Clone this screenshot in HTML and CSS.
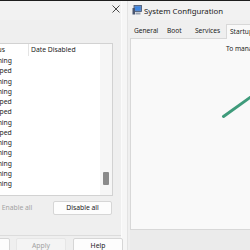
FILE: index.html
```html
<!DOCTYPE html>
<html>
<head>
<meta charset="utf-8">
<link rel="stylesheet" href="styles.css">
</head>
<body>
<div class="screen">
  <div class="topline"></div>
  <div class="desk">
    <section class="win-left">
      <header class="tb-left">
        <svg class="close" width="8" height="8" viewBox="0 0 8 8"><path d="M0.5 0.5 L7.5 7.5 M7.5 0.5 L0.5 7.5" stroke="#333" stroke-width="0.9" fill="none"/></svg>
      </header>
      <div class="body-left">
        <div class="listbox">
          <div class="list">
            <div class="row head"><span class="c-status">Status</span><span class="c-date">Date Disabled</span></div>
            <div class="row"><span class="c-status">Running</span></div>
            <div class="row"><span class="c-status">Stopped</span></div>
            <div class="row"><span class="c-status">Running</span></div>
            <div class="row"><span class="c-status">Running</span></div>
            <div class="row"><span class="c-status">Stopped</span></div>
            <div class="row"><span class="c-status">Stopped</span></div>
            <div class="row"><span class="c-status">Running</span></div>
            <div class="row"><span class="c-status">Stopped</span></div>
            <div class="row"><span class="c-status">Running</span></div>
            <div class="row"><span class="c-status">Running</span></div>
            <div class="row"><span class="c-status">Running</span></div>
            <div class="row"><span class="c-status">Running</span></div>
            <div class="row"><span class="c-status">Running</span></div>
          </div>
          <div class="vscroll"><div class="thumb"></div></div>
        </div>
        <div class="btnrow">
          <button class="btn btn-off enable">Enable all</button>
          <button class="btn disable">Disable all</button>
        </div>
        <div class="footer">
          <button class="btn fb cancel">Cancel</button>
          <button class="btn btn-off fb apply">Apply</button>
          <button class="btn fb help">Help</button>
        </div>
      </div>
    </section>
    <section class="win-right">
      <header class="tb-right">
        <svg class="appicon" width="10" height="10" viewBox="0 0 10 10">
          <rect x="2" y="0.5" width="7.5" height="6" fill="#6d8fc4" stroke="#44536e" stroke-width="0.8"/>
          <rect x="3" y="1.5" width="5.5" height="4" fill="#3f86e0"/>
          <rect x="0.5" y="3" width="2.5" height="6.5" fill="#4a5670"/>
          <rect x="3.5" y="7.5" width="5" height="2" fill="#9aa3b2"/>
        </svg>
        <span class="title">System Configuration</span>
      </header>
      <nav class="tabs">
        <span class="tab t-general">General</span>
        <span class="tab t-boot">Boot</span>
        <span class="tab t-services">Services</span>
        <span class="tab t-startup active">Startup</span>
      </nav>
      <div class="panel">
        <p class="msg">To manage startup items, use the Startup section of Task Manager.</p>
      </div>
      <div class="bottombar"></div>
    </section>
  </div>
  <svg class="annot" width="250" height="250" viewBox="0 0 250 250"><line x1="223.5" y1="116.5" x2="266" y2="86" stroke="#3f9b7b" stroke-width="3" stroke-linecap="round"/></svg>
</div>
</body>
</html>
```
FILE: styles.css
```css
html, body {
  margin: 0;
  padding: 0;
}
body {
  width: 250px;
  height: 250px;
  overflow: hidden;
  background: #f0f0f0;
  font-family: "Noto Sans", "Liberation Sans", sans-serif;
  color: #1b1b1b;
}
.screen {
  position: relative;
  width: 250px;
  height: 250px;
  overflow: hidden;
  display: flex;
  flex-direction: column;
}
.topline {
  height: 1px;
  background: #1e1e1e;
  flex: none;
}
.desk {
  flex: 1;
  display: flex;
  background: #f6f6f6;
}
.win-left {
  width: 121px;
  flex: none;
  border-right: 1px solid #fbfbfb;
  background: #efefef;
  display: flex;
  flex-direction: column;
}
.tb-left {
  height: 19px;
  background: #f2f2f2;
  display: flex;
  justify-content: flex-end;
  align-items: flex-start;
  padding: 4px 0 0 0;
  box-sizing: border-box;
}
.close {
  display: block;
  margin-right: 1px;
}
.body-left {
  flex: 1;
  padding-top: 23px;
  display: flex;
  flex-direction: column;
}
.listbox {
  margin-left: -30px;
  width: 143px;
  height: 153px;
  box-sizing: border-box;
  border: 1px solid #d2d2d2;
  background: #fff;
  display: flex;
  flex: none;
}
.list {
  flex: 1;
  min-width: 0;
}
.row {
  display: flex;
  height: 10.25px;
  font-size: 6.8px;
  line-height: 10.25px;
  white-space: nowrap;
}
.row.head {
  height: 12px;
  line-height: 12px;
}
.c-status {
  width: 58px;
  flex: none;
  box-sizing: border-box;
  padding-left: 14px;
}
.head .c-status {
  border-right: 1px solid #e4e4e4;
}
.c-date {
  padding-left: 2px;
}
.vscroll {
  width: 12px;
  flex: none;
  background: #f6f6f6;
  padding-top: 128px;
  box-sizing: border-box;
}
.thumb {
  width: 6px;
  height: 13px;
  margin-left: 3px;
  background: #8a8a8a;
  border-radius: 1px;
}
.btn {
  font-family: inherit;
  font-size: 6.8px;
  color: #1b1b1b;
  background: #fdfdfd;
  border: 1px solid #d6d6d6;
  border-radius: 2px;
  padding: 0;
  margin: 0;
  height: 14px;
  box-sizing: border-box;
  line-height: 12px;
  text-align: center;
  flex: none;
}
.btn-off {
  color: #a2a2a2;
  background: #f4f4f4;
  border-color: #e6e6e6;
}
.btnrow {
  display: flex;
  gap: 5px;
  margin-top: 5px;
  margin-left: -14px;
}
.enable {
  width: 62px;
  border-color: transparent;
  background: transparent;
}
.disable {
  width: 59px;
}
.footer {
  margin-top: 20px;
  border-top: 1px solid #dcdcdc;
  padding-top: 2px;
  display: flex;
  margin-left: -40px;
  flex: 1;
}
.fb {
  height: 16px;
}
.cancel {
  width: 50px;
}
.apply {
  width: 50px;
  margin-left: 6px;
}
.help {
  width: 50px;
  margin-left: 7px;
}
.win-right {
  flex: 1;
  margin-left: 5px;
  border-left: 1px solid #e3e3e3;
  background: #efefef;
  display: flex;
  flex-direction: column;
  min-width: 0;
}
.tb-right {
  height: 19px;
  background: #f2f2f2;
  display: flex;
  align-items: center;
  padding-left: 4px;
  gap: 2px;
  white-space: nowrap;
}
.appicon {
  display: block;
  flex: none;
  margin-top: -1px;
}
.title {
  font-size: 7.8px;
  color: #1b1b1b;
}
.tabs {
  height: 18px;
  display: flex;
  align-items: flex-end;
  padding-left: 2px;
  white-space: nowrap;
  position: relative;
  z-index: 1;
}
.tab {
  font-size: 6.6px;
  height: 14px;
  line-height: 14px;
  padding-left: 4px;
  box-sizing: border-box;
  flex: none;
}
.t-general { width: 33px; }
.t-boot { width: 28px; }
.t-services { width: 35px; }
.t-startup {
  width: 50px;
  height: 15px;
  padding-left: 3px;
  margin-bottom: -1px;
  background: #f9f9f9;
  border: 1px solid #d8d8d8;
  border-bottom: none;
  line-height: 13px;
}
.panel {
  margin-left: 2px;
  height: 192px;
  box-sizing: border-box;
  border: 1px solid #d8d8d8;
  border-right: none;
  background: #f9f9f9;
  flex: none;
}
.msg {
  margin: 5px 0 0 95px;
  font-size: 6.6px;
  line-height: 9px;
  white-space: nowrap;
}
.bottombar {
  flex: 1;
  margin-left: 2px;
  background: #ebebeb;
}
.annot {
  position: absolute;
  left: 0;
  top: 0;
  pointer-events: none;
}
```
